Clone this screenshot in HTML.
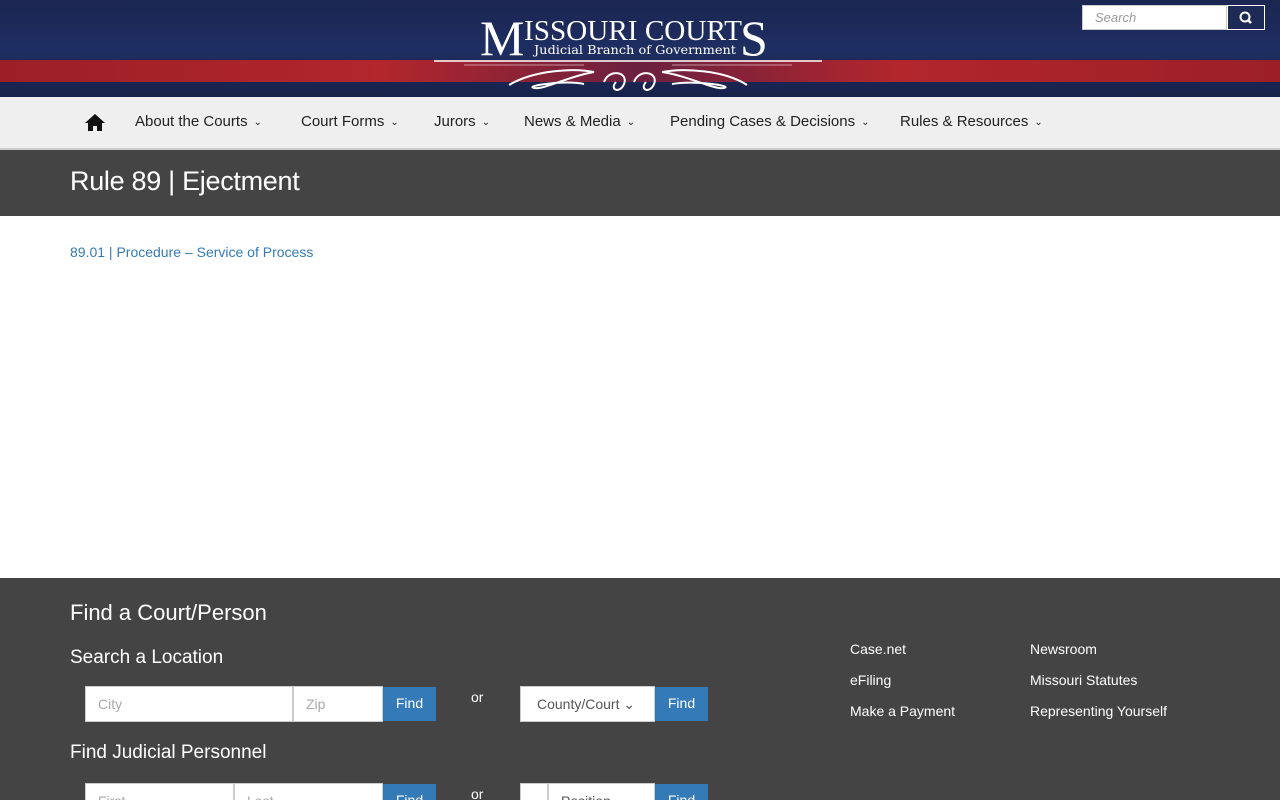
<!DOCTYPE html>
<html><head><style>
*{box-sizing:border-box;margin:0;padding:0}
html,body{width:1280px;height:800px;overflow:hidden}
body{font-family:"Liberation Sans",sans-serif;background:#fff;position:relative}
.hdr{position:absolute;left:0;top:0;width:1280px;height:97px;background:linear-gradient(#1a2550,#1f2e62 50%,#17224a);}
.red{position:absolute;left:0;top:60px;width:1280px;height:22px;background:linear-gradient(90deg,#9c1f26,#b2262c 30%,#6b2040 50%,#b2262c 70%,#9c1f26)}
.nav{position:absolute;top:97px;left:0;width:1280px;height:53px;background:#efefef;border-bottom:2px solid #ccc}
.nav span{position:absolute;top:16px;font-size:15px;color:#222}
.nav i{font-style:normal;font-size:10px;margin-left:6px;position:relative;top:-1px}
.title{position:absolute;top:150px;left:0;width:1280px;height:66px;background:#444}
.title h1{position:absolute;left:70px;top:16px;font-weight:normal;font-size:27px;color:#fff;letter-spacing:-0.3px}
.foot{position:absolute;top:578px;left:0;width:1280px;height:222px;background:#444;color:#fff;overflow:hidden}
.in{position:absolute;background:#fff;border:1px solid #ccc;height:36px;color:#aaa;font-size:14px;padding:9px 12px}
.btn{position:absolute;background:#337ab7;color:#fff;height:34px;font-size:14px;padding:8px 0;text-align:center}
.fl{position:absolute;font-size:14px;color:#fff}
.h{position:absolute;font-weight:normal;color:#fff}
</style></head><body>
<div class="hdr"></div><div class="red"></div>
<svg style="position:absolute;left:434px;top:10px" width="388" height="84">
<text x="46" y="45" font-family="Liberation Serif" font-size="50" fill="#fff">M</text>
<text x="90" y="30" font-family="Liberation Serif" font-size="29" fill="#fff" textLength="218" lengthAdjust="spacingAndGlyphs">ISSOURI COURT</text>
<text x="306" y="45" font-family="Liberation Serif" font-size="50" fill="#fff">S</text>
<text x="100" y="44" font-family="DejaVu Serif" font-size="12" fill="#fff" textLength="202" lengthAdjust="spacingAndGlyphs">Judicial Branch of Government</text>
<line x1="0" y1="51" x2="388" y2="51" stroke="#fff" stroke-width="1.5"/>
<line x1="30" y1="55" x2="150" y2="55" stroke="#fff" stroke-width="0.6"/>
<line x1="238" y1="55" x2="358" y2="55" stroke="#fff" stroke-width="0.6"/>
<path d="M75 75 C100 60 140 58 160 62 C135 66 110 80 100 78 C90 76 130 70 150 74 M170 72 c5 -14 25 -10 20 2 c-4 10 -15 6 -8 -2 M200 72 c5 -14 25 -10 20 2 c-4 10 -15 6 -8 -2 M228 62 C250 58 290 60 313 75 M238 74 C260 70 300 76 290 78 C280 80 255 66 228 62" stroke="#fff" fill="none" stroke-width="2"/>
</svg>
<div style="position:absolute;left:1082px;top:5px;width:145px;height:25px;background:#fff;border:1px solid #ccc;font-size:13px;color:#999;font-style:italic;padding:4px 12px">Search</div>
<div style="position:absolute;left:1227px;top:5px;width:38px;height:25px;background:#1c2a55;border:1px solid #fff">
<svg width="36" height="23" viewBox="0 0 36 23"><circle cx="17" cy="11" r="4.5" stroke="#fff" stroke-width="2" fill="none"/><line x1="20" y1="14" x2="23" y2="17" stroke="#fff" stroke-width="2.5"/></svg></div>
<div class="nav">
<svg style="position:absolute;left:85px;top:17px" width="20" height="17" viewBox="0 0 20 17"><path d="M10 0L0 9h3v8h5v-5h4v5h5V9h3z" fill="#111"/></svg>
<span style="left:135px">About the Courts<i>⌄</i></span>
<span style="left:301px">Court Forms<i>⌄</i></span>
<span style="left:434px">Jurors<i>⌄</i></span>
<span style="left:524px">News &amp; Media<i>⌄</i></span>
<span style="left:670px">Pending Cases &amp; Decisions<i>⌄</i></span>
<span style="left:900px">Rules &amp; Resources<i>⌄</i></span>
</div>
<div class="title"><h1>Rule 89 | Ejectment</h1></div>
<div style="position:absolute;left:70px;top:244px;font-size:14px;color:#337ab7">89.01 | Procedure – Service of Process</div>
<div class="foot">
<div class="h" style="left:70px;top:22px;font-size:22px">Find a Court/Person</div>
<div class="h" style="left:70px;top:69px;font-size:19px">Search a Location</div>
<div class="in" style="left:85px;top:108px;width:208px">City</div>
<div class="in" style="left:293px;top:108px;width:90px">Zip</div>
<div class="btn" style="left:383px;top:109px;width:53px">Find</div>
<div class="fl" style="left:471px;top:111px">or</div>
<div class="in" style="left:520px;top:108px;width:135px;color:#555;padding-left:16px">County/Court ⌄</div>
<div class="btn" style="left:655px;top:109px;width:53px">Find</div>
<div class="h" style="left:70px;top:164px;font-size:19px">Find Judicial Personnel</div>
<div class="in" style="left:85px;top:205px;width:149px">First</div>
<div class="in" style="left:234px;top:205px;width:149px">Last</div>
<div class="btn" style="left:383px;top:206px;width:53px">Find</div>
<div class="fl" style="left:471px;top:208px">or</div>
<div class="in" style="left:520px;top:205px;width:28px"></div>
<div class="in" style="left:548px;top:205px;width:107px;color:#555">Position</div>
<div class="btn" style="left:655px;top:206px;width:53px">Find</div>
<div class="fl" style="left:850px;top:63px">Case.net</div>
<div class="fl" style="left:850px;top:94px">eFiling</div>
<div class="fl" style="left:850px;top:125px">Make a Payment</div>
<div class="fl" style="left:1030px;top:63px">Newsroom</div>
<div class="fl" style="left:1030px;top:94px">Missouri Statutes</div>
<div class="fl" style="left:1030px;top:125px">Representing Yourself</div>
</div>
</body></html>
